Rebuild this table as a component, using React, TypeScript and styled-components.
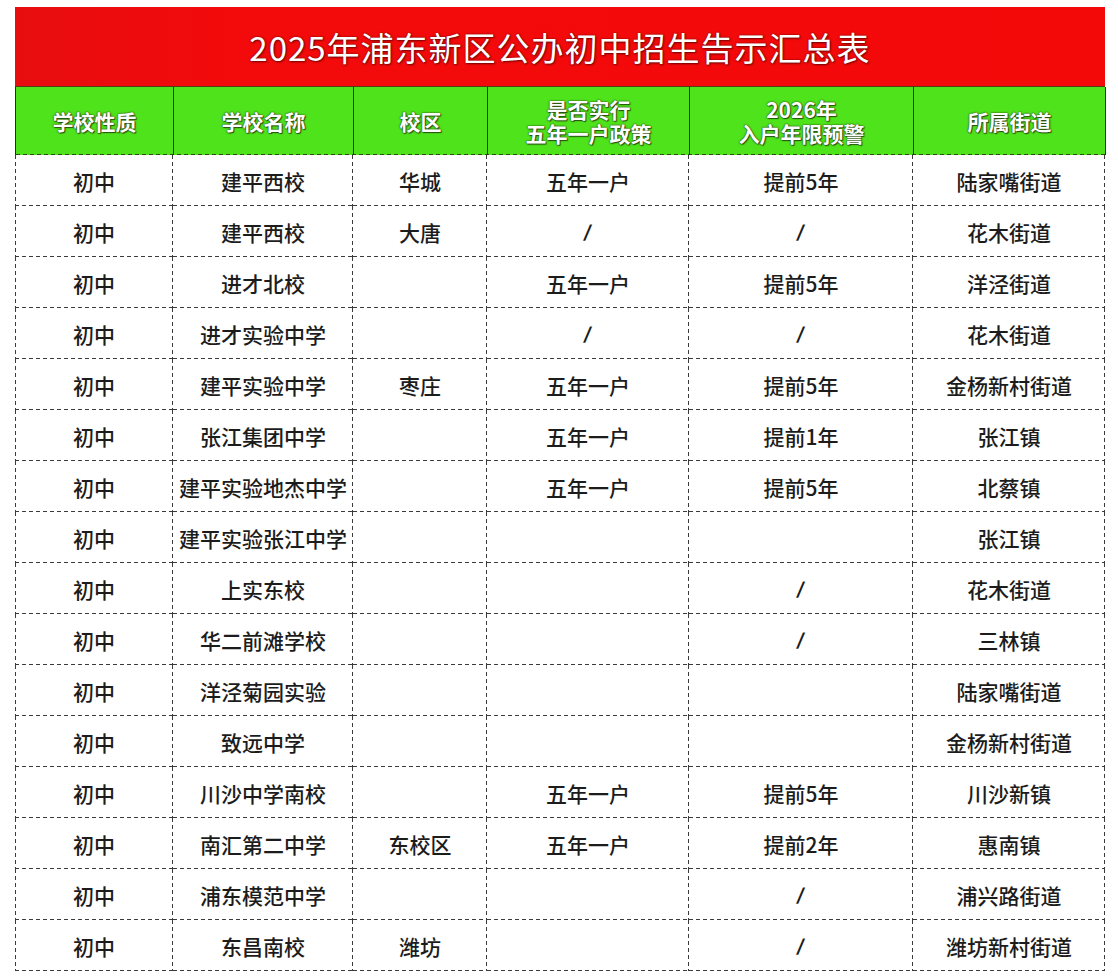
import React from "react";
import styled, { createGlobalStyle } from "styled-components";

const Global = createGlobalStyle`
  html, body { margin: 0; padding: 0; background: #ffffff; }
  body { font-family: "Noto Sans CJK SC", "Noto Sans", sans-serif; }
`;

const COLS = "158px 180px 134px 202px 224px 192px";

const Page = styled.div`
  padding: 7px 0 0 15px;
  width: 1090px;
`;

const Title = styled.div`
  height: 79px;
  background: linear-gradient(90deg, #e70d0f 0%, #f30a0b 20%, #f40909 100%);
  display: flex;
  align-items: center;
  justify-content: center;
  color: #ffffff;
  font-size: 33px;
  font-weight: 400;
  letter-spacing: 1px;
  text-shadow: 0 0 2px rgba(90, 0, 0, 0.9), 1px 1px 2px rgba(60, 0, 0, 0.6);
  border-bottom: 1px solid #5a3a10;
`;

const HeaderRow = styled.div`
  display: grid;
  grid-template-columns: ${COLS};
  height: 68px;
  background: #4fe31b;
  border-left: 1px solid #1c3a08;
  background-image: repeating-linear-gradient(90deg, #2c4a10 0 4px, transparent 4px 7px);
  background-size: 100% 1px;
  background-position: 0 100%;
  background-repeat: no-repeat;
`;

const HeadCell = styled.div`
  display: flex;
  align-items: center;
  justify-content: center;
  border-right: 1px solid #1c3a08;
  color: #ffffff;
  font-size: 21px;
  font-weight: 700;
  line-height: 24px;
  text-align: center;
  white-space: pre-line;
  text-shadow: 0 0 1px #2a4a12, 0 0 2px #2a4a12, 1px 1px 1px rgba(30, 50, 10, 0.8);
`;

const Body = styled.div`
  display: flex;
  flex-direction: column;
`;

const Row = styled.div`
  display: grid;
  grid-template-columns: ${COLS};
  height: 51px;
  background-image:
    repeating-linear-gradient(180deg, #3a3a3a 0 4px, transparent 4px 7px);
  background-size: 1px 100%;
  background-repeat: no-repeat;
  background-position: 0 0;
`;

const Cell = styled.div`
  display: flex;
  align-items: center;
  justify-content: center;
  color: #1c1c1c;
  font-size: 21px;
  font-weight: 500;
  white-space: nowrap;
  background-image:
    repeating-linear-gradient(90deg, #3a3a3a 0 4px, transparent 4px 7px),
    repeating-linear-gradient(180deg, #3a3a3a 0 4px, transparent 4px 7px);
  background-size: 100% 1px, 1px 100%;
  background-position: 0 100%, 100% 0;
  background-repeat: no-repeat;
`;

const Slash = styled.span`
  font-family: "DejaVu Sans", sans-serif;
  font-weight: 700;
  font-size: 20px;
  transform: skewX(-6deg);
`;

const headers: string[] = [
  "学校性质",
  "学校名称",
  "校区",
  "是否实行\n五年一户政策",
  "2026年\n入户年限预警",
  "所属街道",
];

const rows: string[][] = [
  ["初中", "建平西校", "华城", "五年一户", "提前5年", "陆家嘴街道"],
  ["初中", "建平西校", "大唐", "/", "/", "花木街道"],
  ["初中", "进才北校", "", "五年一户", "提前5年", "洋泾街道"],
  ["初中", "进才实验中学", "", "/", "/", "花木街道"],
  ["初中", "建平实验中学", "枣庄", "五年一户", "提前5年", "金杨新村街道"],
  ["初中", "张江集团中学", "", "五年一户", "提前1年", "张江镇"],
  ["初中", "建平实验地杰中学", "", "五年一户", "提前5年", "北蔡镇"],
  ["初中", "建平实验张江中学", "", "", "", "张江镇"],
  ["初中", "上实东校", "", "", "/", "花木街道"],
  ["初中", "华二前滩学校", "", "", "/", "三林镇"],
  ["初中", "洋泾菊园实验", "", "", "", "陆家嘴街道"],
  ["初中", "致远中学", "", "", "", "金杨新村街道"],
  ["初中", "川沙中学南校", "", "五年一户", "提前5年", "川沙新镇"],
  ["初中", "南汇第二中学", "东校区", "五年一户", "提前2年", "惠南镇"],
  ["初中", "浦东模范中学", "", "", "/", "浦兴路街道"],
  ["初中", "东昌南校", "潍坊", "", "/", "潍坊新村街道"],
];

export default function App() {
  return (
    <>
      <Global />
      <Page>
        <Title>2025年浦东新区公办初中招生告示汇总表</Title>
        <HeaderRow>
          {headers.map((h, i) => (
            <HeadCell key={i}>{h}</HeadCell>
          ))}
        </HeaderRow>
        <Body>
          {rows.map((r, i) => (
            <Row key={i}>
              {r.map((c, j) => (
                <Cell key={j}>{c === "/" ? <Slash>/</Slash> : c}</Cell>
              ))}
            </Row>
          ))}
        </Body>
      </Page>
    </>
  );
}
